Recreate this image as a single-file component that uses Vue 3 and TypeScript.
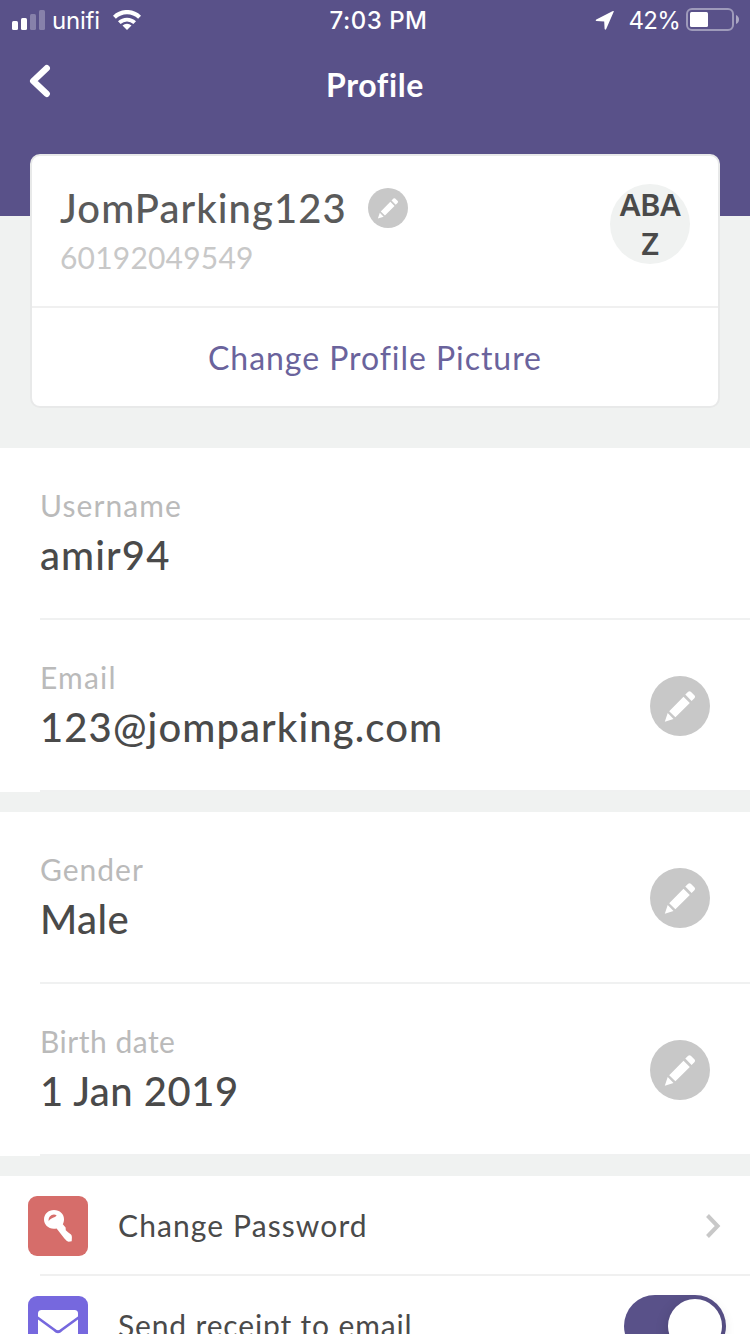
<script setup lang="ts">
import { ref } from 'vue'

interface Field {
  label: string
  value: string
  labelSpacing: number
  valueSpacing: number
  editable: boolean
}

const groups: Field[][] = [
  [
    { label: 'Username', value: 'amir94', labelSpacing: 1.1, valueSpacing: 1.1, editable: false },
    { label: 'Email', value: '123@jomparking.com', labelSpacing: 1.2, valueSpacing: 1.1, editable: true },
  ],
  [
    { label: 'Gender', value: 'Male', labelSpacing: 1, valueSpacing: 0.4, editable: true },
    { label: 'Birth date', value: '1 Jan 2019', labelSpacing: 0.5, valueSpacing: 0.5, editable: true },
  ],
]

const sendReceipt = ref(true)
</script>

<template>
  <main class="screen">
    <header class="header">
      <div class="status">
        <div class="carrier">
          <svg class="signal" width="33" height="20" viewBox="0 0 33 20" fill="#fff">
            <rect x="0" y="11" width="6" height="9" rx="1.5" />
            <rect x="9" y="8" width="6" height="12" rx="1.5" />
            <rect x="18" y="4" width="6" height="16" rx="1.5" opacity=".28" />
            <rect x="27" y="0" width="6" height="20" rx="1.5" opacity=".28" />
          </svg>
          <span class="network">unifi</span>
          <svg width="28" height="20" viewBox="0 0 28 20">
            <path d="M1.4 7.2a18 18 0 0 1 25.2 0" fill="none" stroke="#fff" stroke-width="4.2" />
            <path d="M6.3 12.6a11.2 11.2 0 0 1 15.4 0" fill="none" stroke="#fff" stroke-width="3.8" />
            <path d="M14 20 9.5 15.6a6.4 6.4 0 0 1 9 0Z" fill="#fff" />
          </svg>
        </div>
        <span class="time">7:03 PM</span>
        <div class="power">
          <svg width="20" height="20" viewBox="0 0 20 20">
            <path d="M18.8 1.6 11.2 19q-1 1.400-1.600-.2L9.200 11.500 1.300 10.900q-1.400-.6 0-1.500L17.400 1.200q1.700-.8 1.400.4Z" fill="#fff" />
          </svg>
          <span class="percent">42%</span>
          <svg width="54" height="24" viewBox="0 0 54 24">
            <rect x="1" y="1" width="46" height="21" rx="5" fill="none" stroke="#fff" stroke-opacity=".42" stroke-width="2" />
            <rect x="4" y="4" width="18" height="15" rx="1.5" fill="#fff" />
            <path d="M50 7q3 1.5 3 4.5T50 16Z" fill="#fff" opacity=".5" />
          </svg>
        </div>
      </div>
      <div class="nav">
        <svg class="back" width="22" height="34" viewBox="0 0 22 34">
          <path d="M17.7 4.2 4.2 17 17.7 29.8" fill="none" stroke="#fff" stroke-width="6.4" stroke-linecap="round" stroke-linejoin="round" />
        </svg>
        <h1 class="title">Profile</h1>
      </div>
    </header>

    <section class="card">
      <div class="identity">
        <div>
          <div class="name-row">
            <span class="name">JomParking123</span>
            <svg width="40" height="40" viewBox="0 0 60 60">
              <circle cx="30" cy="30" r="30" fill="#c8c8c8" />
              <path d="M14.8 45.8 17.7 37 23.5 43ZM19.2 35.2 33.5 20.8 39.8 27 25.4 41.2ZM35.3 18.6 38.2 15.8Q39.5 14.6 40.8 15.8L44.6 19.6Q45.6 20.8 44.6 22L41.6 25Z" fill="#fff" />
            </svg>
          </div>
          <div class="phone">60192049549</div>
        </div>
        <div class="avatar">ABA<br />Z</div>
      </div>
      <div class="change">Change Profile Picture</div>
    </section>

    <section v-for="(group, i) in groups" :key="i" class="group">
      <div v-for="field in group" :key="field.label" class="field">
        <div>
          <div class="label" :style="{ letterSpacing: field.labelSpacing + 'px' }">{{ field.label }}</div>
          <div class="value" :style="{ letterSpacing: field.valueSpacing + 'px' }">{{ field.value }}</div>
        </div>
        <svg v-if="field.editable" class="edit" width="60" height="60" viewBox="0 0 60 60">
          <circle cx="30" cy="30" r="30" fill="#c8c8c8" />
          <path d="M14.8 45.8 17.7 37 23.5 43ZM19.2 35.2 33.5 20.8 39.8 27 25.4 41.2ZM35.3 18.6 38.2 15.8Q39.5 14.6 40.8 15.8L44.6 19.6Q45.6 20.8 44.6 22L41.6 25Z" fill="#fff" />
        </svg>
      </div>
    </section>

    <section class="settings">
      <div class="setting">
        <svg width="60" height="60" viewBox="0 0 60 60">
          <rect width="60" height="60" rx="9" fill="#d66d6a" />
          <path d="M26 14c5.8 0 10 4 10 9.200 0 2-.5 3.600-1.200 5L37.600 31.500 37.800 34.200 40 36.300 43 38.600Q44 39.800 43.900 41.500L43.700 45.200 40.600 45.700Q38.500 45.300 36.400 42.600L28.600 32.400C21.500 34 16 29.500 16 23.600 16 18 20.300 14 26 14Z" fill="#fff" />
          <path d="M20.800 25.200C19.800 20.500 24.500 17 28.600 19.200 28.200 20.400 26.800 21.200 25 21.800 22.800 22.600 21.600 23.600 20.800 25.200Z" fill="#d66d6a" />
        </svg>
        <span class="setting-text password">Change Password</span>
        <svg class="chevron" width="16" height="26" viewBox="0 0 16 26">
          <path d="M2.500 2.500 12.600 13 2.500 23.500" fill="none" stroke="#c8c8c8" stroke-width="4" />
        </svg>
      </div>
      <div class="divider"></div>
      <div class="setting">
        <svg width="60" height="60" viewBox="0 0 60 60">
          <rect width="60" height="60" rx="9" fill="#7668de" />
          <rect x="10" y="14" width="40" height="32" rx="3.500" fill="#fff" />
          <path d="M8 20.500 26.500 34Q30 37.500 33.500 34L52 20.500" fill="none" stroke="#7668de" stroke-width="2.600" />
        </svg>
        <span class="setting-text receipt">Send receipt to email</span>
        <button class="toggle" :class="{ on: sendReceipt }" role="switch" :aria-checked="sendReceipt" @click="sendReceipt = !sendReceipt">
          <span class="knob"></span>
        </button>
      </div>
    </section>
  </main>
</template>

<style>
body {
  margin: 0;
}
</style>

<style scoped>
.screen {
  width: 750px;
  height: 1334px;
  overflow: hidden;
  background: #f0f2f1;
  color: #4a4a4a;
  font-family: Lato, "Noto Sans", sans-serif;
}
svg {
  display: block;
  flex: none;
}
.header {
  height: 216px;
  background: #595189;
  color: #fff;
}
.status {
  display: grid;
  grid-template-columns: 1fr auto 1fr;
  height: 40px;
  line-height: 42px;
  font-family: Inter, sans-serif;
  font-size: 24px;
}
.carrier,
.power {
  display: flex;
  align-items: center;
  height: 40px;
}
.carrier {
  padding-left: 12px;
}
.network {
  width: 61px;
  padding-left: 7px;
  box-sizing: border-box;
  margin-right: 7px;
  padding-top: 1px;
  letter-spacing: -0.2px;
}
.time {
  font-weight: 500;
  letter-spacing: 0.5px;
  padding-left: 7px;
}
.power {
  justify-content: flex-end;
  padding-right: 10px;
}
.percent {
  margin: 0 6px 0 13px;
  padding-top: 1px;
  letter-spacing: -0.7px;
}
.nav {
  display: grid;
  grid-template-columns: 1fr auto 1fr;
  align-items: start;
  padding-top: 24px;
}
.back {
  margin-left: 29px;
}
.title {
  margin: 2px 0 0;
  font-size: 32px;
  line-height: 38px;
  font-weight: 700;
  letter-spacing: 0.6px;
}
.card {
  box-sizing: border-box;
  width: 690px;
  height: 254px;
  margin: -62px 30px 40px;
  border: 2px solid #e8e9e9;
  border-radius: 10px;
  background: #fff;
  position: relative;
}
.identity {
  box-sizing: border-box;
  height: 152px;
  padding: 26px 28px 0 28px;
  display: flex;
  justify-content: space-between;
  border-bottom: 2px solid #f0f0f0;
}
.name-row {
  display: flex;
  align-items: center;
  gap: 21px;
  height: 52px;
}
.name {
  width: 287px;
  font-size: 40px;
  font-weight: 500;
  line-height: 48px;
  letter-spacing: 1.05px;
  white-space: nowrap;
  color: #5a5a5a;
}
.phone {
  margin-top: 5px;
  font-size: 30px;
  line-height: 36px;
  letter-spacing: 0.2px;
  color: #c8c8c8;
}
.avatar {
  box-sizing: border-box;
  width: 80px;
  height: 80px;
  margin-top: 2px;
  padding-top: 1px;
  border-radius: 50%;
  background: #f0f2f1;
  text-align: center;
  font-family: "Noto Sans", sans-serif;
  font-size: 31px;
  line-height: 39px;
  font-weight: 600;
  letter-spacing: -0.6px;
}
.change {
  text-align: center;
  font-size: 32px;
  line-height: 100px;
  height: 98px;
  letter-spacing: 0.95px;
  color: #6a639c;
}
.group {
  margin-bottom: 20px;
  background: #fff;
}
.field {
  position: relative;
  box-sizing: border-box;
  height: 172px;
  padding: 39px 40px 0 40px;
  display: flex;
  justify-content: space-between;
}
.field::after {
  content: "";
  position: absolute;
  left: 40px;
  right: 0;
  bottom: 0;
  height: 2px;
  background: #f0f1f1;
}
.label {
  font-size: 30px;
  line-height: 36px;
  color: #bababa;
}
.value {
  margin-top: 8px;
  font-size: 40px;
  font-weight: 500;
  line-height: 49px;
}
.edit {
  margin-top: 17px;
}
.settings {
  background: #fff;
}
.setting {
  box-sizing: border-box;
  height: 98px;
  padding: 20px 24px 0 28px;
  display: flex;
  align-items: flex-start;
}
.setting-text {
  flex: 1;
  margin-left: 30px;
  padding-top: 11px;
  font-size: 30px;
  line-height: 36px;
  white-space: nowrap;
}
.password {
  letter-spacing: 1.1px;
}
.receipt {
  letter-spacing: 0.85px;
}
.chevron {
  margin: 17px 5px 0 0;
}
.divider {
  height: 2px;
  margin-left: 40px;
  background: #f0f0f0;
}
.toggle {
  box-sizing: border-box;
  width: 102px;
  height: 62px;
  margin-top: -1px;
  padding: 4px;
  border: 0;
  border-radius: 31px;
  background: #c8c8c8;
  display: flex;
}
.toggle.on {
  background: #595189;
  justify-content: flex-end;
}
.knob {
  width: 54px;
  height: 54px;
  border-radius: 50%;
  background: #fff;
  box-shadow: 0 4px 14px rgba(0, 0, 0, 0.16);
}
</style>
